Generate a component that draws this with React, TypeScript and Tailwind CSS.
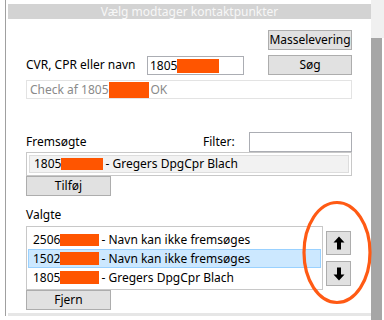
import React from "react";

const font = { fontFamily: '"Noto Sans", "Open Sans", Arial, sans-serif' };

function Btn({ children, className = "" }: { children: React.ReactNode; className?: string }) {
  return (
    <div
      className={
        "flex items-center justify-center bg-[#e1e1e1] border border-[#adadad] text-[12px] leading-none text-black " +
        className
      }
    >
      {children}
    </div>
  );
}

function Red({ w, h = "h-[13px]" }: { w: string; h?: string }) {
  return <span className={"inline-block bg-[#ff5500] " + w + " " + h} />;
}

function Arrow({ up }: { up: boolean }) {
  return (
    <svg width="12" height="14" viewBox="0 0 12 14">
      {up ? (
        <path d="M6 0.5 L11.5 6.5 L8 6.5 L8 13.5 L4 13.5 L4 6.5 L0.5 6.5 Z" fill="#000" />
      ) : (
        <path d="M6 13.5 L11.5 7.5 L8 7.5 L8 0.5 L4 0.5 L4 7.5 L0.5 7.5 Z" fill="#000" />
      )}
    </svg>
  );
}

export default function App() {
  return (
    <div className="relative w-[384px] h-[320px] bg-white overflow-hidden flex text-black" style={font}>
      <div className="ml-[5px] w-px h-[316px] bg-[#a0a0a0]" />
      <div className="w-[365px] flex flex-col">
        <div className="mt-[4px] ml-[2px] w-[363px] h-[15px] bg-[#d3d3d3] flex items-center justify-center text-[12px] leading-none text-[#f7f7f7]">
          Vælg modtager kontaktpunkter
        </div>
        <div className="ml-[20px] w-[326px] flex flex-col">
          <div className="mt-[11px] flex justify-end">
            <Btn className="w-[84px] h-[20px]">Masselevering</Btn>
          </div>
          <div className="mt-[5px] flex h-[20px]">
            <div className="w-[121px] flex items-center text-[12px] leading-none">CVR, CPR eller navn</div>
            <div className="mt-[1px] w-[97px] h-[19px] border border-[#abadb3] flex items-center pl-[2px] text-[12px] leading-none">
              1805<Red w="w-[42px]" h="h-[14px]" />
            </div>
            <Btn className="ml-[24px] w-[84px] h-[20px]">Søg</Btn>
          </div>
          <div className="mt-[5px] h-[19px] border border-[#e3e3e3] flex items-center pl-[3px] text-[12px] leading-none text-[#8a8a8a]">
            Check af 1805<Red w="w-[40px]" h="h-[16px]" />
            <span className="ml-[2px]">OK</span>
          </div>
          <div className="mt-[33px] flex h-[20px] items-center">
            <div className="w-[177px] text-[12px] leading-none">Fremsøgte</div>
            <div className="w-[46px] text-[12px] leading-none">Filter:</div>
            <div className="w-[103px] h-[20px] border border-[#abadb3]" />
          </div>
          <div className="h-[24px] border border-[#c8c8c8] p-[2px] flex">
            <div className="flex-1 bg-[#f2f2f2] border border-[#dddddd] flex items-center pl-[4px] text-[12px] leading-none">
              1805<Red w="w-[42px]" h="h-[12px]" />
              <span className="ml-[2px]">- Gregers DpgCpr Blach</span>
            </div>
          </div>
          <Btn className="w-[85px] h-[20px]">Tilføj</Btn>
          <div className="mt-[11px] h-[16px] flex items-center text-[12px] leading-none">Valgte</div>
          <div className="mt-[3px] flex">
            <div className="w-[297px] h-[64px] border border-[#c8c8c8] p-[1px] pt-[3px] flex flex-col text-[12px] leading-none">
              <div className="h-[19px] flex items-center pl-[5px]">
                2506<Red w="w-[39px]" h="h-[12px]" />
                <span className="ml-[2px]">- Navn kan ikke fremsøges</span>
              </div>
              <div className="h-[19px] flex items-center pl-[4px] bg-[#cce8ff] border border-[#99d1ff]">
                1502<Red w="w-[39px]" />
                <span className="ml-[2px]">- Navn kan ikke fremsøges</span>
              </div>
              <div className="h-[19px] flex items-center pl-[5px]">
                1805<Red w="w-[39px]" />
                <span className="ml-[2px]">- Gregers DpgCpr Blach</span>
              </div>
            </div>
            <div className="ml-[3px] flex flex-col">
              <Btn className="mt-[5px] w-[25px] h-[24px]">
                <Arrow up />
              </Btn>
              <Btn className="mt-[6px] w-[25px] h-[25px]">
                <Arrow up={false} />
              </Btn>
            </div>
          </div>
          <Btn className="w-[85px] h-[20px]">Fjern</Btn>
        </div>
        <div className="mt-[3px] ml-[2px] w-[363px] h-[3px] bg-[#e6e6e6]" />
      </div>
      <div className="w-[13px] flex flex-col">
        <div className="h-[38px] bg-[#f0f0f0]" />
        <div className="flex-1 bg-white">
          <div className="w-[11px] h-full bg-[#a6a6a6]" />
        </div>
      </div>
      <svg className="absolute left-0 top-0 pointer-events-none" width="384" height="320" viewBox="0 0 384 320">
        <ellipse cx="337" cy="252.5" rx="33" ry="50" fill="none" stroke="#ff5a14" strokeWidth="3.2" />
      </svg>
    </div>
  );
}
